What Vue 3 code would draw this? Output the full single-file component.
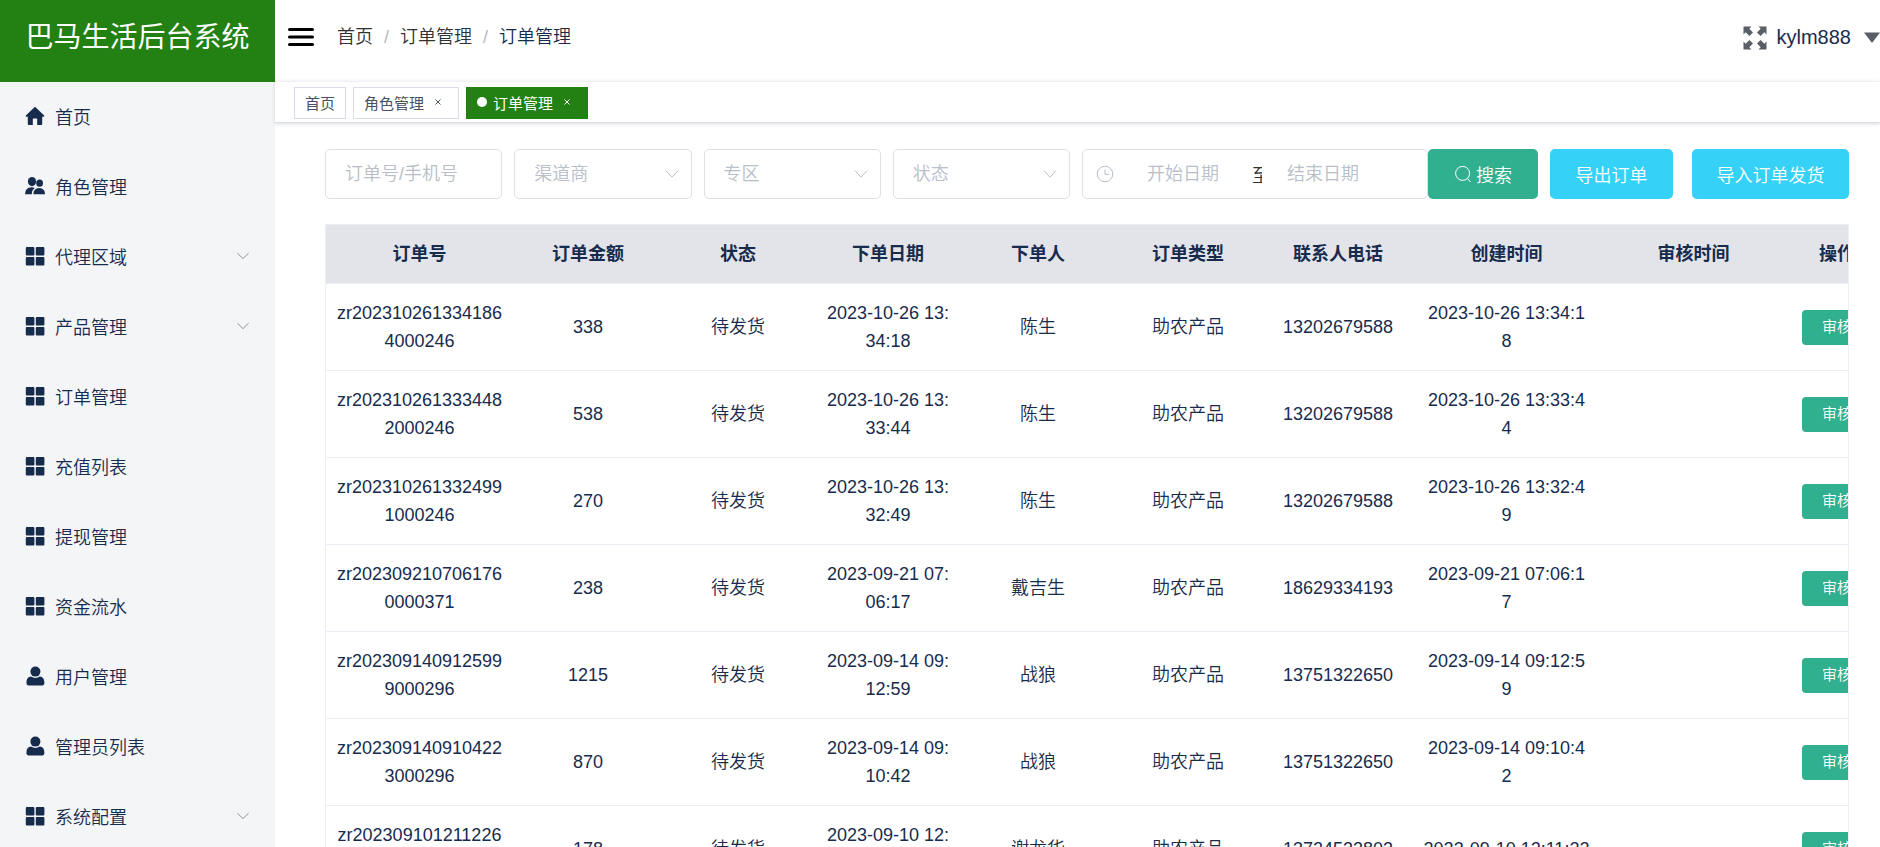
<script setup>
import { ref } from 'vue'

const menu = [
  { label: '首页', icon: 'home' },
  { label: '角色管理', icon: 'peoples' },
  { label: '代理区域', icon: 'grid', children: true },
  { label: '产品管理', icon: 'grid', children: true },
  { label: '订单管理', icon: 'grid' },
  { label: '充值列表', icon: 'grid' },
  { label: '提现管理', icon: 'grid' },
  { label: '资金流水', icon: 'grid' },
  { label: '用户管理', icon: 'user' },
  { label: '管理员列表', icon: 'user' },
  { label: '系统配置', icon: 'grid', children: true }
]

const tabs = [
  { label: '首页' },
  { label: '角色管理', closable: true },
  { label: '订单管理', closable: true, active: true }
]

const keyword = ref('')
const startDate = ref('')
const endDate = ref('')
const filters = ref([
  { label: '渠道商', value: '' },
  { label: '专区', value: '' },
  { label: '状态', value: '' }
])

const columns = [
  { title: '订单号', key: 'no', size: 'wide' },
  { title: '订单金额', key: 'amount', size: 'normal' },
  { title: '状态', key: 'status', size: 'normal' },
  { title: '下单日期', key: 'date', size: 'normal' },
  { title: '下单人', key: 'buyer', size: 'normal' },
  { title: '订单类型', key: 'type', size: 'normal' },
  { title: '联系人电话', key: 'phone', size: 'normal' },
  { title: '创建时间', key: 'date', size: 'wide' },
  { title: '审核时间', key: 'audit', size: 'wide' }
]

const order = (no, amount, date, buyer, phone) => ({
  no, amount, date, buyer, phone, status: '待发货', type: '助农产品', audit: ''
})

const orders = [
  order('zr2023102613341864000246', 338, '2023-10-26 13:34:18', '陈生', '13202679588'),
  order('zr2023102613334482000246', 538, '2023-10-26 13:33:44', '陈生', '13202679588'),
  order('zr2023102613324991000246', 270, '2023-10-26 13:32:49', '陈生', '13202679588'),
  order('zr2023092107061760000371', 238, '2023-09-21 07:06:17', '戴吉生', '18629334193'),
  order('zr2023091409125999000296', 1215, '2023-09-14 09:12:59', '战狼', '13751322650'),
  order('zr2023091409104223000296', 870, '2023-09-14 09:10:42', '战狼', '13751322650'),
  order('zr2023091012112264000296', 178, '2023-09-10 12:11:22', '谢龙华', '13724533803')
]
</script>

<template>
  <div class="layout">
    <aside class="sidebar">
      <h1 class="brand">巴马生活后台系统</h1>
      <nav class="menu">
        <a v-for="item in menu" :key="item.label" class="menu-item" href="#">
          <svg v-if="item.icon === 'home'" class="menu-icon" viewBox="0 0 20 20">
            <path d="M10 0.8 L19.2 9.6 Q19.6 10.8 18.4 10.8 H17.2 V18 Q17.2 19 16.2 19 H12.2 V13 Q12.2 12.4 11.6 12.4 H8.4 Q7.8 12.4 7.8 13 V19 H3.8 Q2.8 19 2.8 18 V10.8 H1.6 Q0.4 10.8 0.8 9.6 Z" />
          </svg>
          <svg v-else-if="item.icon === 'peoples'" class="menu-icon" viewBox="0 0 20 20">
            <ellipse cx="7" cy="5.6" rx="4.1" ry="4.6" />
            <ellipse cx="14.6" cy="7.2" rx="3.4" ry="3.6" />
            <path d="M0 18.2 Q0 11.6 6.6 11.2 Q8.6 11.2 9.8 12 Q6.8 14 6.8 18.2 Z" />
            <path d="M8.4 18.2 Q8.4 12.2 14.2 12 Q20 12.2 20 18.2 Z" />
          </svg>
          <svg v-else-if="item.icon === 'grid'" class="menu-icon" viewBox="0 0 20 20">
            <rect x="0.8" y="1" width="8.6" height="8.4" rx="1" />
            <rect x="10.8" y="1" width="8.6" height="8.4" rx="1" />
            <rect x="0.8" y="11" width="8.6" height="8.4" rx="1" />
            <rect x="10.8" y="11" width="8.6" height="8.4" rx="1" />
          </svg>
          <svg v-else class="menu-icon" viewBox="0 0 20 20">
            <circle cx="10.4" cy="5.6" r="5" />
            <path d="M6 10.6 Q10.4 13.2 14.8 10.6 Q19.4 11 19.4 17 Q19.4 19.4 17.6 19.4 H3.4 Q1.4 19.4 1.4 17 Q1.4 11 6 10.6 Z" />
          </svg>
          <span class="menu-label">{{ item.label }}</span>
          <svg v-if="item.children" class="chevron" viewBox="0 0 14 14">
            <path d="M1.4 4.2 L7 9.6 L12.6 4.2" />
          </svg>
        </a>
      </nav>
    </aside>

    <div class="main">
      <header class="navbar">
        <button class="hamburger" type="button" aria-label="折叠菜单">
          <svg viewBox="0 0 26 20">
            <path d="M1.5 2.5 H24.5 M1.5 10 H24.5 M1.5 17.5 H24.5" />
          </svg>
        </button>
        <nav class="breadcrumb">
          <a href="#">首页</a>
          <span class="slash">/</span>
          <a href="#">订单管理</a>
          <span class="slash">/</span>
          <span class="current">订单管理</span>
        </nav>
        <div class="account">
          <button class="fullscreen" type="button" aria-label="全屏">
            <svg viewBox="0 0 24 24">
              <path d="M0.5 0.5 H8.5 L6.3 2.7 L10 6.4 L6.4 10 L2.7 6.3 L0.5 8.5 Z" />
              <path d="M23.5 0.5 V8.5 L21.3 6.3 L17.6 10 L14 6.4 L17.7 2.7 L15.5 0.5 Z" />
              <path d="M0.5 23.5 V15.5 L2.7 17.7 L6.4 14 L10 17.6 L6.3 21.3 L8.5 23.5 Z" />
              <path d="M23.5 23.5 H15.5 L17.7 21.3 L14 17.6 L17.6 14 L21.3 17.7 L23.5 15.5 Z" />
            </svg>
          </button>
          <button class="user" type="button">
            <span>kylm888</span>
            <svg viewBox="0 0 16 12"><path d="M0 0.5 H16 L8 11 Z" /></svg>
          </button>
        </div>
      </header>

      <nav class="tabs">
        <span v-for="tab in tabs" :key="tab.label" class="tab" :class="{ active: tab.active }">
          <a href="#">{{ tab.label }}</a>
          <button v-if="tab.closable" class="close" type="button" aria-label="关闭">
            <svg viewBox="0 0 8 8"><path d="M1.5 1.5 L6.5 6.5 M6.5 1.5 L1.5 6.5" /></svg>
          </button>
        </span>
      </nav>

      <section class="content">
        <form class="filters" @submit.prevent>
          <label class="filter">
            <input v-model="keyword" class="field" type="text" placeholder="订单号/手机号" aria-label="订单号/手机号" />
          </label>
          <label v-for="filter in filters" :key="filter.label" class="filter">
            <select v-model="filter.value" class="field" :aria-label="filter.label">
              <option value="">{{ filter.label }}</option>
            </select>
            <svg class="arrow" viewBox="0 0 14 14"><path d="M1 3.6 L7 10.2 L13 3.6" /></svg>
          </label>
          <div class="date-range">
            <svg class="clock" viewBox="0 0 18 18">
              <circle cx="9" cy="9" r="7.8" />
              <path d="M9 4.4 V9.4 H13" />
            </svg>
            <input v-model="startDate" class="start" type="text" placeholder="开始日期" aria-label="开始日期" />
            <span class="to">至</span>
            <input v-model="endDate" class="end" type="text" placeholder="结束日期" aria-label="结束日期" />
          </div>
          <button class="btn search" type="submit">
            <svg viewBox="0 0 18 18">
              <circle cx="8.6" cy="8.4" r="7" />
              <path d="M13.4 13.4 L16.4 17" />
            </svg>
            <span>搜索</span>
          </button>
          <button class="btn export" type="button">导出订单</button>
          <button class="btn import" type="button">导入订单发货</button>
        </form>

        <div class="table-wrap">
          <table>
            <colgroup>
              <col v-for="column in columns" :key="column.title" :class="column.size" />
              <col class="narrow" />
            </colgroup>
            <thead>
              <tr>
                <th v-for="column in columns" :key="column.title">{{ column.title }}</th>
                <th>操作</th>
              </tr>
            </thead>
            <tbody>
              <tr v-for="row in orders" :key="row.no">
                <td v-for="column in columns" :key="column.title">{{ row[column.key] }}</td>
                <td><button class="audit" type="button">审核</button></td>
              </tr>
            </tbody>
          </table>
        </div>
      </section>
    </div>
  </div>
</template>

<style>
body {
  margin: 0;
  overflow: hidden;
}
</style>

<style scoped>
* {
  box-sizing: border-box;
}

.layout {
  display: flex;
  height: 100vh;
  background: #fff;
  color: #172b4d;
  font-family: "Liberation Sans", "Noto Sans CJK SC", sans-serif;
  font-size: 18px;
  font-weight: 350;
}

button,
input,
select {
  font: inherit;
}

a {
  color: inherit;
  text-decoration: none;
}

button {
  padding: 0;
  border: 0;
  background: none;
  color: inherit;
  cursor: pointer;
}

svg {
  display: block;
  flex: none;
}

.sidebar {
  flex: none;
  width: 275px;
  overflow: hidden;
  background: #f3f5f7;
}

.brand {
  height: 82px;
  margin: 0;
  background: #238013;
  color: #fff;
  font-size: 28px;
  font-weight: 400;
  line-height: 76px;
  text-align: center;
  white-space: nowrap;
}

.menu-item {
  display: flex;
  align-items: center;
  height: 70px;
  padding: 0 25px 2px;
}

.menu-icon {
  width: 20px;
  height: 20px;
  fill: #172b4d;
}

.menu-label {
  flex: 1;
  margin-left: 10px;
}

.chevron {
  width: 14px;
  height: 14px;
  fill: none;
  stroke: #909399;
  stroke-width: 1;
}

.main {
  display: flex;
  flex: 1;
  flex-direction: column;
  min-width: 0;
}

.navbar {
  display: flex;
  flex: none;
  align-items: flex-start;
  height: 81px;
  padding-left: 13px;
}

.hamburger svg {
  width: 26px;
  height: 74px;
  fill: none;
  stroke: #000;
  stroke-width: 3;
  stroke-linecap: round;
}

.breadcrumb {
  display: flex;
  gap: 11px;
  margin-left: 23px;
  color: #303133;
  line-height: 74px;
}

.slash {
  color: #b4bac4;
}

.current {
  color: #172b4d;
}

.account {
  display: flex;
  align-items: center;
  height: 75px;
  margin-left: auto;
}

.account svg {
  fill: #5a5e66;
}

.fullscreen svg {
  width: 24px;
  height: 24px;
}

.user {
  display: flex;
  align-items: center;
  gap: 13px;
  margin-left: 10px;
  font-size: 20px;
}

.user svg {
  width: 16px;
  height: 12px;
}

.tabs {
  display: flex;
  flex: none;
  gap: 7px;
  height: 42px;
  padding: 5px 19px;
  border-top: 1px solid #f0f1f3;
  border-bottom: 1px solid #d8dce5;
  box-shadow: 0 1px 4px rgba(0, 0, 0, 0.14);
  font-size: 15px;
}

.tab {
  display: flex;
  align-items: center;
  height: 32px;
  padding: 0 10px 2px;
  border: 1px solid #d8dce5;
  color: #495060;
  font-weight: 400;
}

.tab.active {
  border-color: #238013;
  background: #238013;
  color: #fff;
}

.tab.active::before {
  width: 10px;
  height: 10px;
  margin-right: 6px;
  border-radius: 50%;
  background: #fff;
  content: "";
}

.close {
  margin: 0 6px 0 10px;
}

.close svg {
  width: 8px;
  height: 8px;
  fill: none;
  stroke: currentColor;
}

.content {
  flex: 1;
  min-height: 0;
  padding: 26px 31px 0 50px;
  overflow: hidden;
}

.filters {
  display: flex;
  margin-bottom: 25px;
}

.filter {
  position: relative;
  flex: 1;
  min-width: 0;
  margin-right: 12px;
}

.field {
  display: block;
  width: 100%;
  height: 50px;
  padding: 0 19px;
  border: 1px solid #dcdfe6;
  border-radius: 5px;
  outline: none;
  appearance: none;
  background: #fff;
  color: #b9bec8;
}

.arrow {
  position: absolute;
  top: 18px;
  right: 13px;
  width: 14px;
  height: 14px;
  fill: none;
  stroke: #b9bec8;
  stroke-width: 1;
  pointer-events: none;
}

input::placeholder {
  color: #b9bec8;
  opacity: 1;
}

.date-range {
  display: flex;
  flex: none;
  align-items: center;
  width: 346px;
  height: 50px;
  padding: 0 13px;
  border: 1px solid #dcdfe6;
  border-radius: 5px;
}

.clock {
  width: 18px;
  height: 18px;
  fill: none;
  stroke: #b9bec8;
}

.date-range input {
  min-width: 0;
  padding: 0;
  border: 0;
  outline: none;
  background: none;
  text-align: center;
}

.date-range .start {
  width: 138px;
}

.date-range .end {
  width: 122px;
}

.to {
  flex: none;
  width: 10px;
  overflow: hidden;
  color: #303133;
}

.btn {
  display: flex;
  flex: none;
  align-items: center;
  justify-content: center;
  gap: 4px;
  height: 50px;
  border-radius: 5px;
  color: #fff;
}

.search {
  width: 110px;
  background: #30b08f;
}

.search svg {
  width: 18px;
  height: 18px;
  fill: none;
  stroke: #fff;
}

.export {
  width: 123px;
  margin-left: 12px;
  background: #36d1f7;
}

.import {
  width: 157px;
  margin-left: 19px;
  background: #36d1f7;
}

.table-wrap {
  overflow-x: auto;
  scrollbar-width: none;
  border: 1px solid #ebeef5;
}

table {
  width: 1561px;
  border-collapse: separate;
  border-spacing: 0;
  table-layout: fixed;
}

.wide {
  width: 187px;
}

.normal {
  width: 150px;
}

.narrow {
  width: 100px;
}

th,
td {
  border-bottom: 1px solid #ebeef5;
  line-height: 28px;
  text-align: center;
  word-break: break-all;
}

th {
  height: 59px;
  padding: 0 10px;
  background: #e2e4e9;
  font-weight: 700;
}

td {
  height: 87px;
  padding: 15px 10px;
}

.audit {
  width: 70px;
  height: 35px;
  border-radius: 4px;
  background: #30b08f;
  color: #fff;
  font-size: 15px;
}
</style>
